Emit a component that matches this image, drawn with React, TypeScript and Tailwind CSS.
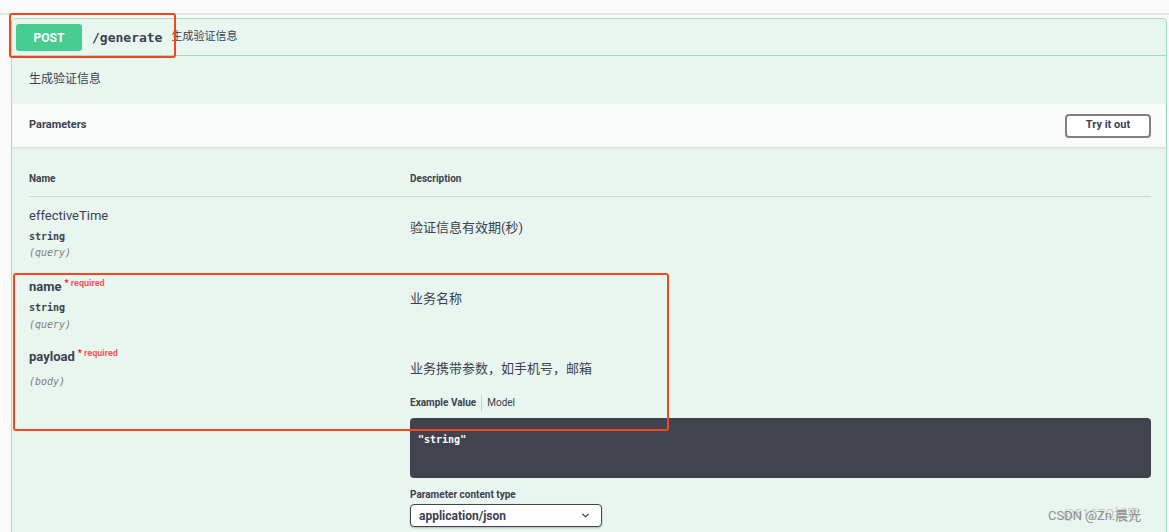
import { ChevronDown } from "lucide-react";

const sans = "font-['Roboto','Noto_Sans_CJK_SC',sans-serif]";
const mono = "font-['DejaVu_Sans_Mono','Liberation_Mono',monospace]";

function Required() {
  return (
    <span className="relative -top-[5px] ml-[3px] text-[9px] text-[#f25a5a]">
      <span className="text-[#ff0000]">*</span> required
    </span>
  );
}

export default function App() {
  return (
    <div className={`relative min-h-screen bg-[#fafafa] pt-[13px] text-[#3b4151] ${sans}`}>
      <div className="h-[2px] bg-[#e6e6e6]" />

      <div className="mt-[3px] ml-[11px] mr-[2px] rounded-t-[4px] border border-[#9fdfc0] bg-[#e8f6ef]">
        {/* summary bar */}
        <div className="flex items-center border-b border-[#9fdfc0] pt-[5px] pb-[4px] pl-[4px]">
          <div className="flex h-[27px] w-[66px] items-center justify-center rounded-[3px] bg-[#49cc90] text-[12px] font-bold text-white">
            POST
          </div>
          <span className={`ml-[10px] text-[13px] font-semibold ${mono}`}>/generate</span>
          <span className="ml-[9px] text-[11px] text-[#3b4151]">生成验证信息</span>
        </div>

        {/* description */}
        <div className="h-[48px] pl-[17px] pt-[14px] text-[12px] leading-[18px]">生成验证信息</div>

        {/* parameters header */}
        <div className="flex h-[43px] items-center justify-between bg-[#fafcfb] pl-[17px] pr-[15px] shadow-[0_1px_2px_rgba(0,0,0,0.1)]">
          <span className="text-[11px] font-bold">Parameters</span>
          <button className="h-[24px] w-[86px] rounded-[4px] border-2 border-[#808080] bg-white text-[11px] font-bold text-[#3b4151]">
            Try it out
          </button>
        </div>

        {/* table */}
        <div className="pl-[17px] pr-[15px] pt-[25px]">
          <div className="grid grid-cols-[381px_1fr] border-b border-[#d0d8d6] pb-[10px] text-[10px] font-bold leading-[14px]">
            <span>Name</span>
            <span>Description</span>
          </div>

          {/* effectiveTime */}
          <div className="grid h-[72px] grid-cols-[381px_1fr]">
            <div className="pt-[10px]">
              <div className="text-[13px] leading-[18px]">effectiveTime</div>
              <div className={`mt-[5px] text-[10px] font-semibold leading-[14px] ${mono}`}>string</div>
              <div className={`mt-[2px] text-[10px] italic leading-[14px] text-[#808080] ${mono}`}>(query)</div>
            </div>
            <div className="pt-[22px] text-[13px] leading-[18px]">验证信息有效期(秒)</div>
          </div>

          {/* name */}
          <div className="grid h-[70px] grid-cols-[381px_1fr]">
            <div className="pt-[9px]">
              <div className="text-[13px] font-bold leading-[18px]">
                name<Required />
              </div>
              <div className={`mt-[4px] text-[10px] font-semibold leading-[14px] ${mono}`}>string</div>
              <div className={`mt-[3px] text-[10px] italic leading-[14px] text-[#808080] ${mono}`}>(query)</div>
            </div>
            <div className="pt-[21px] text-[13px] leading-[18px]">业务名称</div>
          </div>

          {/* payload */}
          <div className="grid grid-cols-[381px_1fr] pb-[20px]">
            <div className="pt-[9px]">
              <div className="text-[13px] font-bold leading-[18px]">
                payload<Required />
              </div>
              <div className={`mt-[8px] text-[10px] italic leading-[14px] text-[#808080] ${mono}`}>(body)</div>
            </div>
            <div className="pt-[21px]">
              <div className="text-[13px] leading-[18px]">业务携带参数，如手机号，邮箱</div>
              <div className="mt-[17px] flex items-center text-[10px] leading-[14px]">
                <span className="font-bold">Example Value</span>
                <span className="mx-[5px] h-[16px] w-px bg-[#c8d0cd]" />
                <span>Model</span>
              </div>
              <div className="mt-[7px] h-[60px] rounded-[4px] bg-[#41444e] px-[8px] pt-[8px]">
                <span className={`text-[10px] font-semibold text-white ${mono}`}>"string"</span>
              </div>
              <div className="mt-[10px] text-[10px] font-bold leading-[14px]">Parameter content type</div>
              <div className="mt-[2px] flex h-[23px] w-[192px] items-center justify-between rounded-[4px] border border-[#41444e] bg-white pl-[8px] pr-[10px] shadow-[0_1px_2px_rgba(0,0,0,0.25)]">
                <span className="text-[12px] font-bold">application/json</span>
                <ChevronDown size={11} strokeWidth={3} />
              </div>
            </div>
          </div>
        </div>
      </div>

      {/* annotation boxes */}
      <div className="pointer-events-none absolute left-[9px] top-[13px] h-[45px] w-[167px] rounded-[3px] border-2 border-[#f5461e]" />
      <div className="pointer-events-none absolute left-[13px] top-[273px] h-[158px] w-[656px] rounded-[3px] border-2 border-[#f5461e]" />

      {/* watermark */}
      <div className="pointer-events-none absolute left-[1063px] top-[504px] text-[13px] text-[#c8c8c8]">@51CTO博客</div>
      <div className="pointer-events-none absolute left-[1048px] top-[506px] text-[13px] text-[#8f8f8f]">CSDN @Zn.晨光</div>
    </div>
  );
}
